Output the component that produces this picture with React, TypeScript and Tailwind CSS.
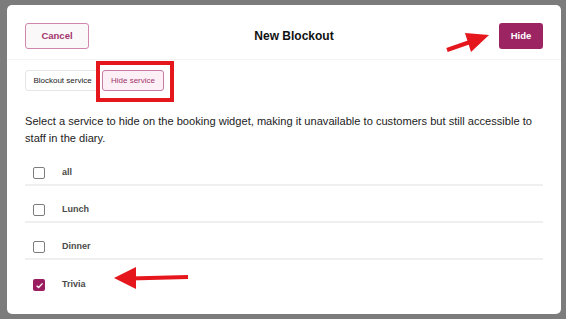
import React from "react";

const rows = [
  { label: "all", checked: false },
  { label: "Lunch", checked: false },
  { label: "Dinner", checked: false },
  { label: "Trivia", checked: true },
];

export default function App() {
  return (
    <div
      className="relative w-[566px] h-[319px] bg-[#7c7c7c] pt-[5px] pl-[7px] overflow-hidden"
      style={{ fontFamily: '"Liberation Sans", Arial, sans-serif' }}
    >
      <div className="w-[554px] h-[309px] bg-white rounded-[5px] flex flex-col">
        {/* header */}
        <div className="h-[55px] flex items-start justify-between px-[18px] pt-[18px] border-b border-[#f4f4f4]">
          <button className="w-[64px] h-[26px] rounded-[3px] border border-[#cf86ad] bg-[#faf8f9] text-[9.5px] font-bold text-[#a3336c]">
            Cancel
          </button>
          <div className="h-[26px] flex items-center text-[12px] font-bold text-[#111]">New Blockout</div>
          <button className="w-[44px] h-[26px] rounded-[3px] bg-[#9c2463] text-[9.5px] font-bold text-white">
            Hide
          </button>
        </div>
        {/* tabs */}
        <div className="flex gap-[2px] px-[18px] pt-[10px]">
          <button className="w-[75px] h-[21px] rounded-[3px] border border-[#e6e6e6] bg-white text-[8px] text-[#222]">
            Blockout service
          </button>
          <button className="w-[62px] h-[21px] rounded-[3px] border border-[#c87ba3] bg-[#fcf0f6] text-[8px] text-[#a3336c]">
            Hide service
          </button>
        </div>
        {/* description */}
        <p className="px-[18px] pt-[22px] text-[11.1px] leading-[17px] text-[#222]">
          Select a service to hide on the booking widget, making it unavailable to customers but still accessible to
          staff in the diary.
        </p>
        {/* list */}
        <div className="px-[18px] pt-[2px] flex flex-col">
          {rows.map((r, i) => (
            <div
              key={r.label}
              className={`h-[37px] pt-[13px] flex items-center ${i < rows.length - 1 ? "border-b-2 border-[#efefef]" : ""}`}
            >
              <div className="w-[37px] pl-[8px] flex items-center">
                {r.checked ? (
                  <div className="w-[12px] h-[12px] rounded-[2px] bg-[#9a1d60] flex items-center justify-center">
                    <svg width="9" height="9" viewBox="0 0 10 10">
                      <path d="M1.8 5.2 L4 7.3 L8.4 2.6" stroke="white" strokeWidth="1.5" fill="none" />
                    </svg>
                  </div>
                ) : (
                  <div className="w-[12px] h-[12px] rounded-[2px] border-[1.5px] border-[#7d7d7d] bg-white" />
                )}
              </div>
              <span className="text-[9px] font-bold text-[#4a4a4a]">{r.label}</span>
            </div>
          ))}
        </div>
      </div>

      {/* annotations */}
      <div className="absolute left-[96px] top-[61px] w-[78px] h-[41px] border-[4px] border-[#e5161c]" />
      <svg className="absolute left-0 top-0" width="566" height="319" viewBox="0 0 566 319">
        <line x1="447" y1="50" x2="470" y2="42" stroke="#e5161c" strokeWidth="4" />
        <polygon points="489,35 465,33 471,52" fill="#e5161c" />
        <line x1="188" y1="277" x2="130" y2="278.5" stroke="#e5161c" strokeWidth="4" />
        <polygon points="114,278 136,267 136,289" fill="#e5161c" />
      </svg>
    </div>
  );
}
